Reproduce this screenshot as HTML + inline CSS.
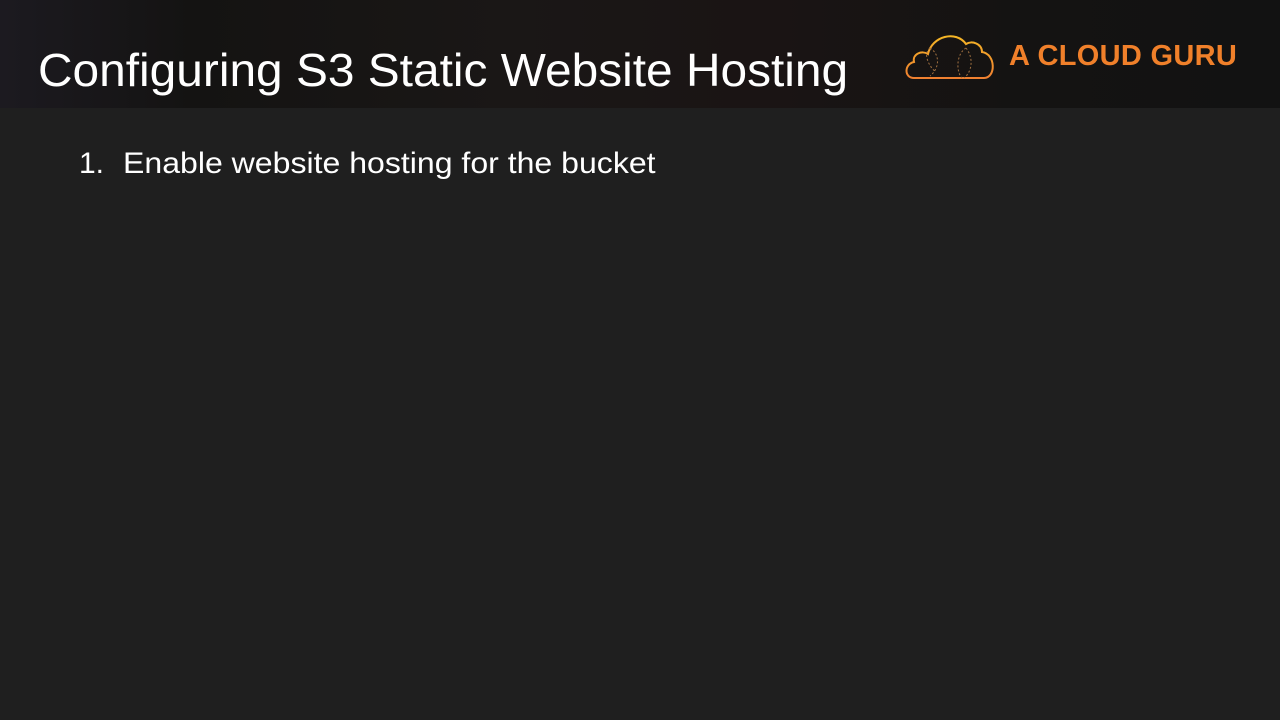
<!DOCTYPE html>
<html><head><style>
body{margin:0;width:1280px;height:720px;background:#1f1f1f;overflow:hidden;font-family:"Liberation Sans",sans-serif;}
.hdr{position:absolute;left:0;top:0;width:1280px;height:108px;background:linear-gradient(90deg,#1c1a20 0%,#141312 15%,#1a1716 40%,#1a1414 60%,#141312 80%,#121212 100%);}
.t{position:absolute;left:38px;top:40px;font-size:46px;color:#fff;white-space:nowrap;transform-origin:0 0;transform:scaleX(1.04);line-height:60px;}
.b{position:absolute;left:79px;top:145px;font-size:30px;color:#fff;white-space:nowrap;line-height:38px;}
.b span{position:absolute;left:44px;}
.logo{position:absolute;left:1009px;top:38px;font-size:29px;font-weight:bold;color:#f0802a;white-space:nowrap;line-height:36px;letter-spacing:0.3px;}
</style></head><body>
<div class="hdr"></div>
<div class="t">Configuring S3 Static Website Hosting</div>
<svg style="position:absolute;left:900px;top:28px" width="100" height="54" viewBox="0 0 100 54">
<defs><linearGradient id="g" x1="0" y1="0" x2="0" y2="1"><stop offset="0" stop-color="#f5b626"/><stop offset="1" stop-color="#ef8030"/></linearGradient></defs>
<path d="M14 50 C4 50 4 36 14 34 C12 26 22 22 28 26 C32 8 56 2 66 16 C72 12 82 16 82 24 C96 26 96 50 84 50 Z" fill="none" stroke="url(#g)" stroke-width="2"/>
<path d="M30 20 C22 26 30 40 36 44 M30 20 C40 26 40 40 30 48 M66 20 C56 26 56 44 62 50 M66 20 C74 30 72 44 64 50" fill="none" stroke="#a07040" stroke-width="1" stroke-dasharray="2 2"/>
</svg>
<div class="logo">A CLOUD GURU</div>
<div class="b">1.<span style="transform-origin:0 0;transform:scaleX(1.068);display:inline-block">Enable website hosting for the bucket</span></div>
</body></html>
